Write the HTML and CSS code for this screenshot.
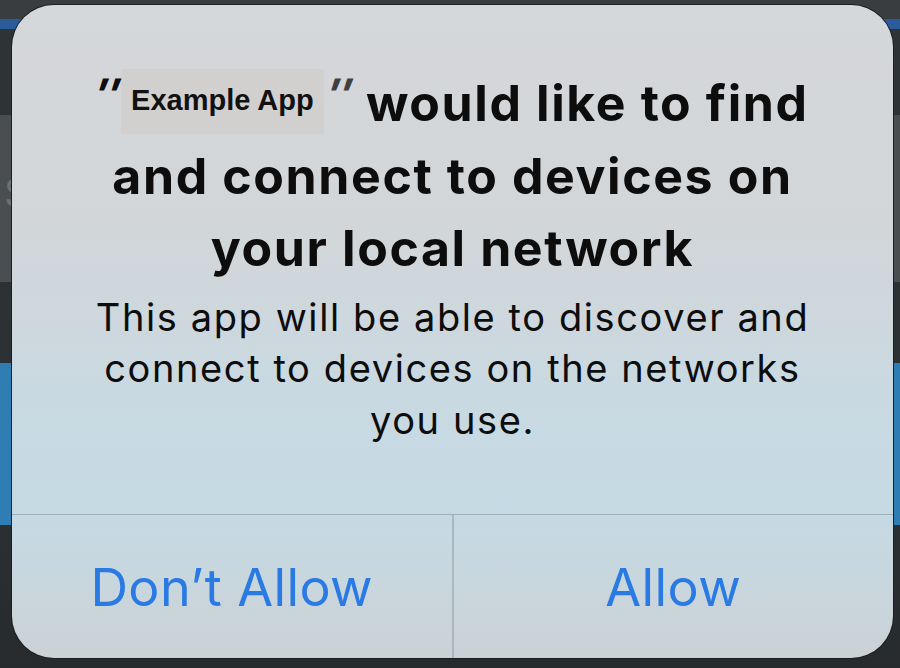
FILE: index.html
```html
<!DOCTYPE html>
<html>
<head>
    <link rel="stylesheet" href="styles.css">
</head>
<body>
    <div class="backdrop">
        <span class="ghost">S</span>
        <div class="alert">
            <div class="message">
                <h1 class="title">
                    <span class="quote">&#8243;</span><span class="app-name">Example App</span><span class="quote quote-close">&#8243;</span> would like to find<br>
                    and connect to devices on<br>
                    your local network
                </h1>
                <p class="detail">This app will be able to discover and<br>connect to devices on the networks<br>you use.</p>
            </div>
            <div class="actions">
                <button class="action">Don&#8217;t Allow</button>
                <button class="action">Allow</button>
            </div>
        </div>
    </div>
</body>
</html>
```

FILE: styles.css
```css
body {
    margin: 0;
    height: 668px;
    overflow: hidden;
    font-family: Inter, "Noto Sans", sans-serif;
    background: linear-gradient(180deg,
        #3a3d40 0, #3a3d40 19px,
        #2c5b9c 19px, #2c5b9c 29px,
        #2e3336 29px, #2e3336 115px,
        #4a4e50 115px, #4a4e50 282px,
        #2c3234 282px, #2c3234 363px,
        #2e7db3 363px, #2e7db3 525px,
        #2a2f31 525px, #272b2d 668px);
}
.backdrop {
    position: relative;
    height: 100%;
    box-sizing: border-box;
    padding: 5px 7px 10px 12px;
}
.ghost {
    position: absolute;
    left: 4px;
    top: 168px;
    font-size: 40px;
    color: #6b7072;
}
.alert {
    position: relative;
    height: 100%;
    display: flex;
    flex-direction: column;
    border-radius: 42px;
    overflow: hidden;
    box-shadow: 0 0 0 1px #1c1f21;
    background: linear-gradient(180deg, #d5d7d9 0%, #d2d6d9 35%, #c9d9e1 60%, #c5dae4 76%, #c8d7df 86%, #cbd2d6 100%);
}
.message {
    flex: 1;
    padding-top: 62px;
    text-align: center;
    color: #0d0d0d;
}
.title {
    margin: 0;
    font-size: 50px;
    line-height: 72.5px;
    font-weight: 700;
    letter-spacing: 1.6px;
}
.quote {
    display: inline-block;
    font-size: 42px;
    font-weight: 800;
    transform: skewX(-12deg);
    vertical-align: top;
    line-height: 54px;
    letter-spacing: 0;
}
.quote-close {
    margin-left: 4px;
    opacity: 0.75;
}
.app-name {
    display: inline-block;
    vertical-align: top;
    margin-top: 2px;
    padding: 0 10px;
    height: 65px;
    line-height: 62px;
    background: #d2d0cf;
    font-family: "Liberation Sans", Arial, sans-serif;
    font-size: 29px;
    font-weight: 700;
    letter-spacing: 0;
    color: #111;
}
.detail {
    margin: 7px 0 0;
    font-size: 38px;
    line-height: 51.5px;
    font-weight: 400;
    letter-spacing: 1.6px;
}
.actions {
    height: 143px;
    display: flex;
    border-top: 1px solid #9fb1bb;
}
.action {
    flex: 1;
    border: 0;
    background: none;
    padding: 2px 0 0;
    font-family: Inter, "Noto Sans", sans-serif;
    font-size: 52px;
    letter-spacing: 0.4px;
    color: #2a7ae4;
}
.action + .action {
    border-left: 2px solid #a9b7be;
}
```
